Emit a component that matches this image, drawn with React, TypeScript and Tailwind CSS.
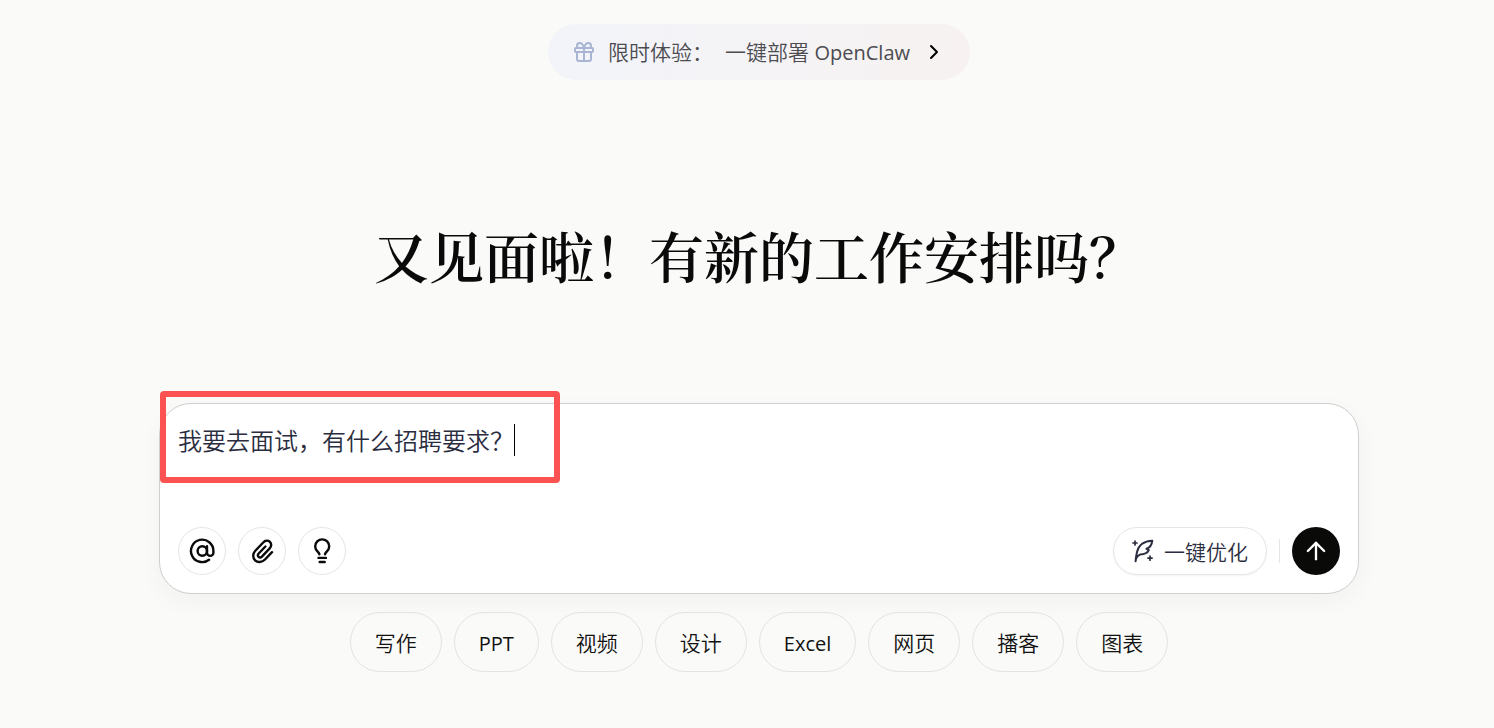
import React, { useState } from "react";
import { ArrowUp, ChevronRight, Gift } from "lucide-react";

const categories = [
  { label: "写作" },
  { label: "PPT", latin: true },
  { label: "视频" },
  { label: "设计" },
  { label: "Excel", latin: true },
  { label: "网页" },
  { label: "播客" },
  { label: "图表" },
];

type IconProps = { className?: string; children: React.ReactNode };

const Icon = ({ className = "size-6", children }: IconProps) => (
  <svg
    viewBox="0 0 24 24"
    className={className}
    fill="none"
    stroke="currentColor"
    strokeWidth="2.4"
    strokeLinecap="round"
    strokeLinejoin="round"
    overflow="visible"
    aria-hidden="true"
  >
    {children}
  </svg>
);

const MentionIcon = () => (
  <Icon>
    <circle cx="12.300" cy="12" r="4.700" />
    <path d="M17 7.300v6.400a3.200 3.200 0 0 0 6.400 0V12a11.200 11.200 0 1 0-4.300 8.700" />
  </Icon>
);

const ClipIcon = () => (
  <Icon>
    <path d="M22 13.200l-7 7.300c-3 3.100-7.400 3.200-9.900.8s-2.600-6.500.2-9.500l7.900-8.300c2-2.100 4.900-2.300 6.700-.6s1.700 4.500-.2 6.500l-7.800 8.200c-1 1-2.400 1.100-3.300.2s-.9-2.200.1-3.300l6.700-7" />
  </Icon>
);

const BulbIcon = () => (
  <Icon>
    <path d="M9.400 15.300C9 12.700 5.200 11.900 5.200 7.400a7 7 0 0 1 14 0c0 4.500-3.800 5.300-4.200 7.900" />
    <path d="M8.500 18.900h7.400M9.700 23h5" />
  </Icon>
);

const FeatherIcon = () => (
  <Icon>
    <path
      strokeWidth="2"
      d="M3.600 22.300C3.800 19 5.200 16.800 8 15.600C12 15.400 15.500 14.300 16.800 11.200L14.500 9.800C18 8.800 19.800 6 20.300 1.700C11.500 2 6.500 6.800 5 13C4.300 16 3.800 19 3.600 22.300"
    />
    <path strokeWidth="1.700" d="M3 2v4M1 4h4M18 17v4.200M15.900 19.100h4.200" />
  </Icon>
);

const iconButton =
  "flex size-12 items-center justify-center rounded-full border border-[#e5e5e5] bg-white text-[#0a0a0b] hover:bg-gray-50";

const App = () => {
  const [prompt, setPrompt] = useState("我要去面试，有什么招聘要求？");

  return (
    <main
      lang="zh-CN"
      className="flex min-h-screen flex-col items-center bg-[#fafaf8] pt-6 pr-3 pl-9 font-['Open_Sans','Noto_Sans_CJK_SC',sans-serif] font-[350]"
    >
      {/* - Promo Banner */}
      <a
        href="#deploy"
        className="flex h-14 items-center rounded-full bg-linear-to-r from-[#f2f4fa] to-[#f7f2f1] px-6 text-[21px] text-[#4b4b50]"
      >
        <Gift className="mr-3 size-6 text-[#a9b5d3]" strokeWidth={2} />
        <span className="mr-3 pt-0.5">限时体验：</span>
        <span className="pt-0.5">
          一键部署 <span className="text-xl font-normal">OpenClaw</span>
        </span>
        <ChevronRight className="ml-3 size-6 text-black" strokeWidth={2} />
      </a>

      <h1 className="mt-36 font-['Liberation_Serif','Noto_Serif_CJK_SC','Noto_Sans_CJK_SC',serif] text-[55px] leading-[72px] font-semibold text-[#0a0a0b]">
        又见面啦！有新的工作安排吗？
      </h1>

      {/* - Prompt Box */}
      <form
        onSubmit={(e) => e.preventDefault()}
        className="mt-[107px] flex w-full max-w-[1200px] flex-col rounded-[32px] border border-[#cfcfcf] bg-white px-[18px] pt-[14px] pb-[18px] shadow-[0_8px_24px_rgba(0,0,0,0.04)]"
      >
        <div className="relative flex h-11 items-center">
          <div className="pointer-events-none absolute -top-[27px] -left-[18px] h-[92px] w-[400px] rounded-sm border-6 border-[#fc5252]" />
          <input
            type="text"
            aria-label="工作安排"
            value={prompt}
            onChange={(e) => setPrompt(e.target.value)}
            className="field-sizing-content bg-transparent pt-0.5 text-2xl text-[#2a2d40] outline-none"
          />
          <span className="h-8 w-px bg-black" />
        </div>

        <div className="mt-[65px] flex items-center justify-between">
          <div className="flex gap-3">
            <button type="button" aria-label="提及" className={iconButton}>
              <MentionIcon />
            </button>
            <button type="button" aria-label="附件" className={iconButton}>
              <ClipIcon />
            </button>
            <button type="button" aria-label="灵感" className={iconButton}>
              <BulbIcon />
            </button>
          </div>
          <div className="flex items-center">
            <button
              type="button"
              className="flex h-12 items-center gap-2 rounded-full border border-[#e5e5e5] px-[18px] text-[21px] text-[#2a2d40] shadow-xs"
            >
              <FeatherIcon />
              <span className="pt-1">一键优化</span>
            </button>
            <span className="mx-3 h-6 w-px bg-[#e5e5e5]" />
            <button
              type="submit"
              aria-label="发送"
              className="flex size-12 items-center justify-center rounded-full bg-[#0a0a08] text-white"
            >
              <ArrowUp className="size-7" strokeWidth={2} />
            </button>
          </div>
        </div>
      </form>

      {/* - Category Buttons */}
      <div className="mt-[18px] flex flex-wrap justify-center gap-3">
        {categories.map(({ label, latin }) => (
          <button
            key={label}
            type="button"
            className={`h-15 rounded-full border border-[#e3e3e6] px-6 pt-1 text-[#111111] hover:bg-white ${latin ? "text-xl font-normal" : "text-[21px]"}`}
          >
            {label}
          </button>
        ))}
      </div>
    </main>
  );
};

export default App;
